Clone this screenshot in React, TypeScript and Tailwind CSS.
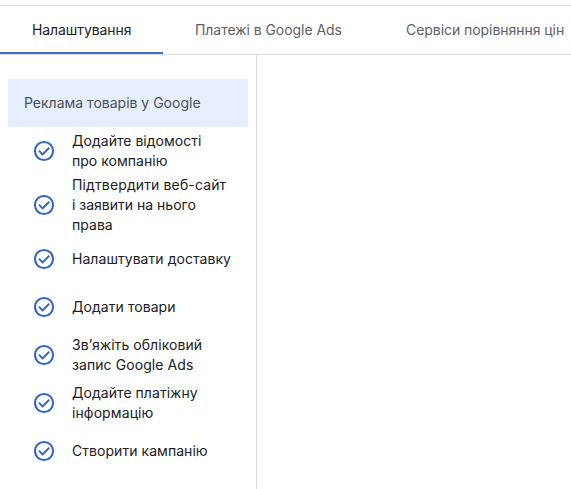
import React from 'react';

const CheckIcon = () => (
    <svg viewBox="0 0 24 24" className="w-6 h-6 shrink-0 fill-[#3367c0]">
        <path d="M10.6 16.7l7.3-7.3-1.4-1.4-5.9 5.9-2.95-2.95-1.4 1.4 4.35 4.35zM12 22.1a10.1 10.1 0 1 1 0-20.2 10.1 10.1 0 0 1 0 20.2zm0-2.1a8 8 0 1 0 0-16 8 8 0 0 0 0 16z" />
    </svg>
);

const App = () => {
    const tabs = [
        { label: "Налаштування", style: "w-[163px] pl-8 border-b-2 border-[#3a71cd] text-[#202124] tracking-[-0.08px]" },
        { label: "Платежі в Google Ads", style: "w-[211px] pl-8 text-[#5f6062] tracking-[-0.05px]" },
        { label: "Сервіси порівняння цін", style: "w-[222px] pl-8 text-[#5f6062] tracking-[-0.05px]" },
    ];

    const steps = [
        { lines: [{ text: "Додайте відомості", style: "tracking-[0.03px]" }, { text: "про компанію", style: "tracking-[0.03px]" }] },
        {
            lines: [
                { text: "Підтвердити веб-сайт", style: "tracking-[0.13px]" },
                { text: "і заявити на нього", style: "" },
                { text: "права", style: "tracking-[0.03px]" },
            ]
        },
        { lines: [{ text: "Налаштувати доставку", style: "tracking-[0.05px]" }] },
        { lines: [{ text: "Додати товари", style: "tracking-[0.06px]" }] },
        { lines: [{ text: "Зв’яжіть обліковий", style: "tracking-[0.06px]" }, { text: "запис Google Ads", style: "tracking-[0.08px]" }] },
        { lines: [{ text: "Додайте платіжну", style: "tracking-[0.05px]" }, { text: "інформацію", style: "tracking-[0.1px]" }] },
        { lines: [{ text: "Створити кампанію", style: "tracking-[0.05px]" }] },
    ];

    return (
        <div className="w-[571px] h-[489px] pt-[5px] flex flex-col overflow-hidden bg-white font-['Inter','Noto_Sans',sans-serif] text-sm leading-5 text-[#202124]">
            {/* Tabs */}
            <nav className="h-[50px] shrink-0 flex border-y border-[#dadce0]">
                {tabs.map((tab) => (
                    <div key={tab.label} className={`h-12 shrink-0 pt-3.5 whitespace-nowrap ${tab.style}`}>
                        {tab.label}
                    </div>
                ))}
            </nav>

            {/* Sidebar */}
            <aside className="w-[257px] flex-1 pt-6 px-2 border-r border-[#dadce0]">
                <h2 className="h-12 px-4 flex items-center bg-[#e7effc] text-[#4b4f5c] whitespace-nowrap">
                    Реклама товарів у Google
                </h2>
                <ul>
                    {steps.map((step, index) => (
                        <li key={index} className="min-h-12 pl-6 flex items-center gap-4">
                            <CheckIcon />
                            <p className="whitespace-nowrap">
                                {step.lines.map((line) => (
                                    <span key={line.text} className={`block ${line.style}`}>{line.text}</span>
                                ))}
                            </p>
                        </li>
                    ))}
                </ul>
            </aside>
        </div>
    );
};

export default App;
